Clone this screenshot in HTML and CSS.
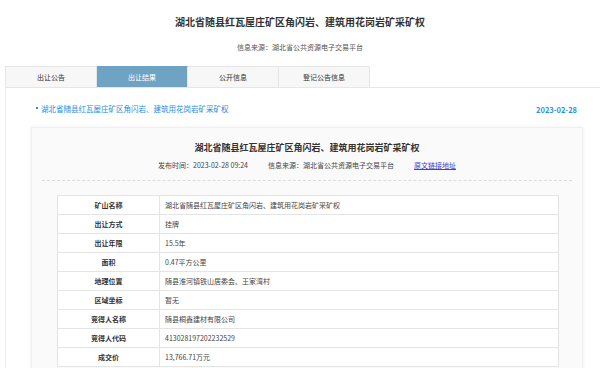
FILE: index.html
```html
<!DOCTYPE html>
<html lang="zh-CN">
<head>
    <meta charset="UTF-8">
    <meta name="viewport" content="width=device-width, initial-scale=1.0">
    <title>湖北省随县红瓦屋庄矿区角闪岩、建筑用花岗岩矿采矿权</title>
    <link rel="stylesheet" href="styles.css">
</head>
<body>
    <div class="header">
        <h1 class="page-title">湖北省随县红瓦屋庄矿区角闪岩、建筑用花岗岩矿采矿权</h1>
        <p class="page-source">信息来源：湖北省公共资源电子交易平台</p>
    </div>
    <div class="wrap">
        <div class="tabs">
            <div class="tab">出让公告</div>
            <div class="tab active">出让结果</div>
            <div class="tab">公开信息</div>
            <div class="tab">登记公告信息</div>
        </div>
        <div class="panel">
            <div class="list-row">
                <a class="list-link" href="#"><span class="bullet"></span>湖北省随县红瓦屋庄矿区角闪岩、建筑用花岗岩矿采矿权</a>
                <span class="list-date">2023-02-28</span>
            </div>
            <div class="card">
                <div class="card-head">
                    <h2 class="card-title">湖北省随县红瓦屋庄矿区角闪岩、建筑用花岗岩矿采矿权</h2>
                    <div class="card-meta">
                        <span>发布时间：2023-02-28 09:24</span>
                        <span>信息来源：湖北省公共资源电子交易平台</span>
                        <a class="orig-link" href="#">原文链接地址</a>
                    </div>
                </div>
                <table class="info">
                    <tr><th>矿山名称</th><td>湖北省随县红瓦屋庄矿区角闪岩、建筑用花岗岩矿采矿权</td></tr>
                    <tr><th>出让方式</th><td>挂牌</td></tr>
                    <tr><th>出让年限</th><td>15.5年</td></tr>
                    <tr><th>面积</th><td>0.47平方公里</td></tr>
                    <tr><th>地理位置</th><td>随县淮河镇铁山居委会、王家湾村</td></tr>
                    <tr><th>区域坐标</th><td>暂无</td></tr>
                    <tr><th>竞得人名称</th><td>随县桐鑫建材有限公司</td></tr>
                    <tr><th>竞得人代码</th><td>413028197202232529</td></tr>
                    <tr><th>成交价</th><td>13,766.71万元</td></tr>
                </table>
            </div>
        </div>
    </div>
</body>
</html>
```

FILE: styles.css
```css
body {
    margin: 0;
    background-color: #fff;
    color: #333;
    font-family: "Noto Sans CJK SC", "Liberation Sans", sans-serif;
    overflow: hidden;
}
.header {
    text-align: center;
    padding-top: 15px;
}
.page-title {
    margin: 0;
    font-size: 10px;
    line-height: 14px;
    font-weight: bold;
    color: #333;
}
.page-source {
    margin: 13px 0 0;
    font-size: 7px;
    line-height: 10px;
    color: #555;
}
.wrap {
    margin: 14px 0 0 5px;
    width: 610px;
}
.tabs {
    display: flex;
}
.tab {
    width: 90px;
    height: 20px;
    line-height: 20px;
    text-align: center;
    font-size: 7px;
    color: #333;
    background-color: #f7f7f7;
    border-top: 1px solid #e6e6e6;
    border-right: 1px solid #e6e6e6;
}
.tab:first-child {
    border-left: 1px solid #e6e6e6;
}
.tab.active {
    background-color: #6fa3c4;
    border-top-color: #6fa3c4;
    color: #fff;
}
.panel {
    border-top: 1px solid #e6e6e6;
    border-left: 1px solid #ececec;
    padding-top: 14px;
    height: 300px;
}
.list-row {
    display: flex;
    justify-content: space-between;
    align-items: center;
    padding: 0 38px 0 30px;
    height: 12px;
}
.list-link {
    display: flex;
    align-items: center;
    font-size: 7.5px;
    color: #2a8ce0;
    text-decoration: none;
}
.bullet {
    width: 2px;
    height: 2px;
    background-color: #2a8ce0;
    margin-right: 3px;
}
.list-date {
    font-size: 7.5px;
    font-weight: bold;
    color: #2a93e8;
    margin-top: 3px;
}
.card {
    margin: 13px 0 0 25px;
    width: 550px;
    background-color: #fafafa;
    border: 1px solid #efefef;
    box-shadow: 0 0 3px rgba(0, 0, 0, 0.08);
    padding: 0 0 20px;
}
.card-head {
    margin: 0 10px;
    padding: 13px 0 10px;
    border-bottom: 1px dashed #dcdcdc;
    text-align: center;
}
.card-title {
    margin: 0;
    font-size: 9px;
    line-height: 14px;
    font-weight: bold;
    color: #333;
}
.card-meta {
    display: flex;
    justify-content: center;
    gap: 20px;
    margin-top: 5px;
    font-size: 7px;
    line-height: 10px;
    color: #444;
}
.orig-link {
    color: #3d3fd0;
}
.info {
    margin: 14px 0 0 25px;
    width: 502px;
    border-collapse: collapse;
    background-color: #fff;
    font-size: 7px;
}
.info th,
.info td {
    height: 18px;
    padding: 0;
    border: 1px solid #e4e4e4;
    line-height: 18px;
}
.info th {
    width: 101px;
    font-weight: bold;
    color: #333;
    text-align: center;
}
.info td {
    padding-left: 5px;
    color: #444;
}
```
